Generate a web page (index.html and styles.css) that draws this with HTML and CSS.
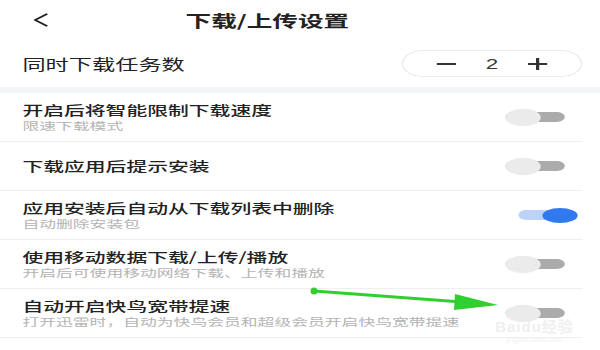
FILE: index.html
```html
<!DOCTYPE html>
<html lang="zh">
<head>
    <meta charset="UTF-8">
    <title>下载/上传设置</title>
    <link rel="stylesheet" href="styles.css">
</head>
<body>
    <div class="screen">
        <div class="header">
            <svg class="back" width="9" height="14" viewBox="0 0 9 14">
                <polyline points="8.5,0.8 1,7 8.5,13.2" fill="none" stroke="#222" stroke-width="1.6"/>
            </svg>
            <div class="title">下载/上传设置</div>
        </div>

        <div class="row row-top">
            <div class="label">同时下载任务数</div>
            <div class="stepper">
                <span class="minus"></span>
                <span class="count">2</span>
                <span class="plus"></span>
            </div>
        </div>

        <div class="band"></div>

        <div class="list">
            <div class="row">
                <div class="text">
                    <div class="label">开启后将智能限制下载速度</div>
                    <div class="sub">限速下载模式</div>
                </div>
                <div class="toggle"><span class="knob"></span></div>
            </div>
            <div class="row">
                <div class="text">
                    <div class="label">下载应用后提示安装</div>
                </div>
                <div class="toggle"><span class="knob"></span></div>
            </div>
            <div class="row">
                <div class="text">
                    <div class="label">应用安装后自动从下载列表中删除</div>
                    <div class="sub">自动删除安装包</div>
                </div>
                <div class="toggle on"><span class="knob"></span></div>
            </div>
            <div class="row">
                <div class="text">
                    <div class="label">使用移动数据下载/上传/播放</div>
                    <div class="sub">开启后可使用移动网络下载、上传和播放</div>
                </div>
                <div class="toggle"><span class="knob"></span></div>
            </div>
            <div class="row">
                <div class="text">
                    <div class="label">自动开启快鸟宽带提速</div>
                    <div class="sub">打开迅雷时，自动为快鸟会员和超级会员开启快鸟宽带提速</div>
                </div>
                <div class="toggle"><span class="knob"></span></div>
            </div>
        </div>
    </div>

    <!-- 标注箭头 -->
    <svg class="arrow" width="600" height="350" viewBox="0 0 600 350">
        <line x1="314" y1="291" x2="462" y2="302" stroke="#2fcf2f" stroke-width="3" stroke-linecap="round"/>
        <circle cx="314" cy="291" r="3.5" fill="#2fcf2f"/>
        <polygon points="455,294 498,305 454,310" fill="#2fcf2f"/>
    </svg>

    <div class="watermark">
        <div class="wm-main">Baidu经验</div>
        <div class="wm-url">jingyan.baidu.com</div>
    </div>
</body>
</html>
```

FILE: styles.css
```css
html, body {
    margin: 0;
    background: #fff;
    overflow: hidden;
}

body {
    width: 600px;
    height: 350px;
    position: relative;
    font-family: "Noto Sans CJK SC", "Noto Sans", sans-serif;
    color: #222;
}

/* 原截图横向被拉伸，375 宽布局按 1.6 倍横向缩放 */
.screen {
    width: 375px;
    transform: scaleX(1.6);
    transform-origin: 0 0;
}

.header {
    height: 40px;
    display: flex;
    align-items: center;
    padding-left: 21px;
}

.back {
    display: block;
}

.title {
    margin-left: 86px;
    font-size: 16px;
    font-weight: 700;
    line-height: 22px;
}

.row {
    display: flex;
    align-items: center;
    justify-content: space-between;
    height: 48px;
    padding: 0 0 0 14px;
}

.row-top {
    height: 47px;
    padding-right: 11px;
}

.label {
    font-size: 13px;
    line-height: 16px;
    font-weight: 500;
    color: #222;
}

.row-top .label {
    font-size: 14.5px;
    font-weight: 400;
}

.sub {
    font-size: 10.5px;
    line-height: 12px;
    margin-top: 2px;
    color: #b4b4b4;
}

.stepper {
    width: 113px;
    height: 27px;
    box-sizing: border-box;
    border: 1px solid #ececec;
    border-radius: 14px;
    display: flex;
    align-items: center;
    justify-content: center;
    gap: 19px;
}

.minus {
    width: 12px;
    height: 2px;
    background: #333;
}

.count {
    font-size: 14px;
    line-height: 16px;
    color: #333;
    font-family: "Liberation Sans", sans-serif;
}

.plus {
    width: 12px;
    height: 12px;
    position: relative;
}

.plus::before,
.plus::after {
    content: "";
    position: absolute;
    background: #333;
}

.plus::before {
    left: 0;
    top: 5px;
    width: 12px;
    height: 2px;
}

.plus::after {
    left: 5px;
    top: 0;
    width: 2px;
    height: 12px;
}

.band {
    height: 6px;
    background: #f4f5f7;
}

.list .row {
    border-bottom: 1px solid #efefef;
    margin-right: 11px;
}

.toggle {
    width: 37px;
    height: 10px;
    margin-right: 11px;
    border-radius: 5px;
    background: #ababab;
    display: flex;
    align-items: center;
}

.knob {
    width: 22px;
    height: 17px;
    border-radius: 50%;
    background: #ebebeb;
    box-shadow: 0 0 1px rgba(0, 0, 0, 0.08);
}

.toggle.on {
    margin-right: 3px;
    background: #bcd2f7;
    justify-content: flex-end;
}

.toggle.on .knob {
    height: 15px;
    background: #3079ee;
    box-shadow: none;
}

.arrow {
    position: absolute;
    left: 0;
    top: 0;
}

.watermark {
    position: absolute;
    left: 482px;
    top: 318px;
    width: 105px;
    text-align: center;
    color: #efefef;
    font-family: "Liberation Sans", "Noto Sans CJK SC", sans-serif;
}

.wm-main {
    font-size: 15px;
    line-height: 17px;
    font-weight: 700;
    letter-spacing: 1px;
}

.wm-url {
    font-size: 7px;
    line-height: 9px;
    color: #f3f3f3;
}
```
